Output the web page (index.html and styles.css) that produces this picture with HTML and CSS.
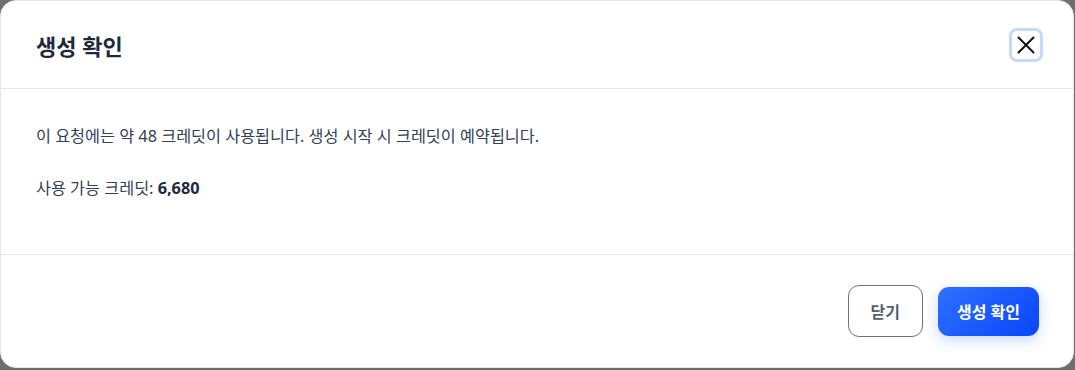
FILE: index.html
```html
<!DOCTYPE html>
<html lang="ko">
<head>
    <meta charset="UTF-8">
    <meta name="viewport" content="width=device-width, initial-scale=1.0">
    <title>생성 확인</title>
    <link rel="stylesheet" href="styles.css">
</head>
<body>
    <div class="dialog">
        <div class="dialog-header">
            <h2 class="dialog-title">생성 확인</h2>
            <button class="close-btn" aria-label="닫기">
                <svg width="18" height="18" viewBox="0 0 18 18">
                    <path d="M1.5 1.5 L16.5 16.5 M16.5 1.5 L1.5 16.5" stroke="#111" stroke-width="2" stroke-linecap="round" fill="none"/>
                </svg>
            </button>
        </div>

        <div class="dialog-body">
            <p>이 요청에는 약 48 크레딧이 사용됩니다. 생성 시작 시 크레딧이 예약됩니다.</p>
            <p>사용 가능 크레딧: <strong>6,680</strong></p>
        </div>

        <div class="dialog-footer">
            <button class="btn btn-outline">닫기</button>
            <button class="btn btn-primary">생성 확인</button>
        </div>
    </div>
</body>
</html>
```

FILE: styles.css
```css
* {
    box-sizing: border-box;
}
body {
    margin: 0;
    background: #6e6e6e;
    font-family: "Noto Sans", "Noto Sans CJK KR", sans-serif;
    color: #334155;
}
.dialog {
    width: 1074px;
    height: 368px;
    background: #fff;
    border: 1px solid #e2e8f0;
    border-radius: 16px;
    display: flex;
    flex-direction: column;
    overflow: hidden;
}
.dialog-header {
    height: 88px;
    display: flex;
    align-items: center;
    justify-content: space-between;
    padding: 0 30px 0 35px;
    border-bottom: 1px solid #e2e8f0;
}
.dialog-title {
    margin: 0;
    font-size: 22px;
    font-weight: 700;
    color: #1e293b;
}
.close-btn {
    width: 34px;
    height: 34px;
    padding: 0;
    margin-top: 1px;
    display: flex;
    align-items: center;
    justify-content: center;
    background: #fff;
    border: 3px solid #c4dafd;
    border-radius: 8px;
    cursor: pointer;
}
.dialog-body {
    flex: 1;
    padding: 35px 35px 0;
    font-size: 16.25px;
    line-height: 24px;
}
.dialog-body p {
    margin: 0 0 28px;
}
.dialog-body strong {
    color: #1e293b;
    font-weight: 700;
}
.dialog-footer {
    height: 113px;
    display: flex;
    align-items: center;
    justify-content: flex-end;
    gap: 15px;
    padding: 0 34px 0 35px;
    border-top: 1px solid #e2e8f0;
}
.btn {
    font-family: inherit;
    font-size: 16px;
    font-weight: 700;
    border-radius: 11px;
    cursor: pointer;
}
.btn-outline {
    height: 52px;
    padding: 0 22px;
    background: #fff;
    color: #565f6c;
    border: 1px solid #6b7280;
}
.btn-primary {
    height: 49px;
    padding: 0 19px;
    color: #fff;
    border: none;
    background: linear-gradient(135deg, #2f70ff 0%, #0846fb 100%);
    box-shadow: 0 4px 14px rgba(37, 99, 235, 0.25);
}
```
